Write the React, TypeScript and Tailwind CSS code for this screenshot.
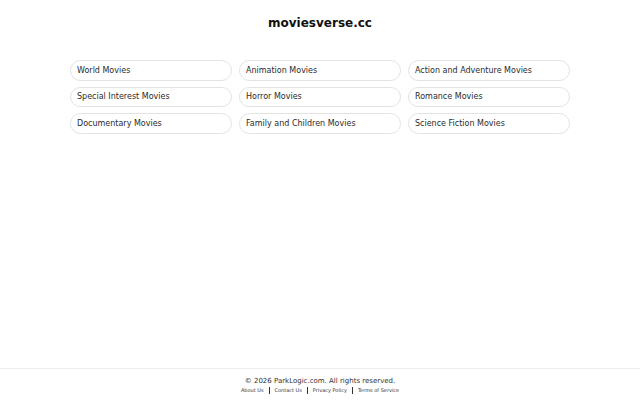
const categories = [
  'World Movies',
  'Animation Movies',
  'Action and Adventure Movies',
  'Special Interest Movies',
  'Horror Movies',
  'Romance Movies',
  'Documentary Movies',
  'Family and Children Movies',
  'Science Fiction Movies',
];

const links = ['About Us', 'Contact Us', 'Privacy Policy', 'Terms of Service'];

export default function App() {
  return (
    <div
      className="flex min-h-screen flex-col bg-white text-[#333]"
      style={{ fontFamily: '"DejaVu Sans", sans-serif' }}
    >
      {/* Header */}
      <header className="pt-[14px] text-center">
        <h1 className="text-[12px] font-bold leading-[18px] text-[#111]">moviesverse.cc</h1>
      </header>

      {/* Category grid */}
      <main className="mx-auto mt-[28px] w-[500px]">
        <div className="grid grid-cols-3 gap-x-[7px] gap-y-[6px]">
          {categories.map((c) => (
            <a
              key={c}
              href="#"
              className="flex h-[20.5px] items-center rounded-full border border-[#e3e3e3] px-[6px] pt-px text-[8px] text-[#2b2b2b]"
            >
              {c}
            </a>
          ))}
        </div>
      </main>

      {/* Footer */}
      <footer className="mt-auto border-t border-[#ececec] pt-[7px] pb-[6px] text-center">
        <p className="text-[7px] leading-[10px] text-[#333]">© 2026 ParkLogic.com. All rights reserved.</p>
        <div className="flex items-center justify-center gap-[5px] text-[5px] leading-[8px] text-[#333]">
          {links.map((l, i) => (
            <div key={l} className="flex items-center gap-[5px]">
              {i > 0 && <span className="h-[7px] w-px bg-[#333]" />}
              <a href="#">{l}</a>
            </div>
          ))}
        </div>
      </footer>
    </div>
  );
}
